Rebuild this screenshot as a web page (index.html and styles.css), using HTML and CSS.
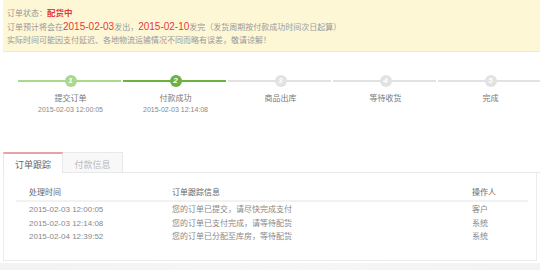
FILE: index.html
```html
<!DOCTYPE html>
<html>
<head>
<meta charset="utf-8">
<link rel="stylesheet" href="styles.css">
</head>
<body>
<div class="notice">
  <div class="line">订单状态：<span class="status">配货中</span></div>
  <div class="line">订单预计将会在<span class="date">2015-02-03</span>发出，<span class="date">2015-02-10</span>发完（发货周期按付款成功时间次日起算）</div>
  <div class="line">实际时间可能因支付延迟、各地物流运输情况不同而略有误差，敬请谅解！</div>
</div>

<div class="steps">
  <div class="step done">
    <div class="bar"><span class="dot">1</span></div>
    <div class="label">提交订单</div>
    <div class="time">2015-02-03 12:00:05</div>
  </div>
  <div class="step current">
    <div class="bar"><span class="dot">2</span></div>
    <div class="label">付款成功</div>
    <div class="time">2015-02-03 12:14:08</div>
  </div>
  <div class="step">
    <div class="bar"><span class="dot">3</span></div>
    <div class="label">商品出库</div>
  </div>
  <div class="step">
    <div class="bar"><span class="dot">4</span></div>
    <div class="label">等待收货</div>
  </div>
  <div class="step">
    <div class="bar"><span class="dot">5</span></div>
    <div class="label">完成</div>
  </div>
</div>

<div class="tabs">
  <div class="tab active">订单跟踪</div>
  <div class="tab">付款信息</div>
  <div class="tab-fill"></div>
</div>
<div class="panel">
  <div class="table">
    <div class="row head">
      <div class="c1">处理时间</div>
      <div class="c2">订单跟踪信息</div>
      <div class="c3">操作人</div>
    </div>
    <div class="row">
      <div class="c1">2015-02-03 12:00:05</div>
      <div class="c2">您的订单已提交，请尽快完成支付</div>
      <div class="c3">客户</div>
    </div>
    <div class="row">
      <div class="c1">2015-02-03 12:14:08</div>
      <div class="c2">您的订单已支付完成，请等待配货</div>
      <div class="c3">系统</div>
    </div>
    <div class="row">
      <div class="c1">2015-02-04 12:39:52</div>
      <div class="c2">您的订单已分配至库房，等待配货</div>
      <div class="c3">系统</div>
    </div>
  </div>
</div>
<div class="bottom"></div>
</body>
</html>
```

FILE: styles.css
```css
* { box-sizing: border-box; }
html, body { margin: 0; padding: 0; }
body {
  width: 540px;
  height: 270px;
  overflow: hidden;
  background: #fff;
  font-family: "Liberation Sans", "Noto Sans CJK SC", sans-serif;
  font-size: 8px;
  color: #888;
}
.notice {
  margin-left: 3px;
  background: #fef7d6;
  border-bottom: 1px solid #f3e9c2;
  padding: 6px 4px 3px;
  height: 52px;
  color: #999;
}
.notice .line { line-height: 14px; height: 14px; white-space: nowrap; }
.status { color: #e4393c; font-weight: bold; font-size: 8.5px; }
.date { color: #e4393c; font-size: 10px; }

.steps {
  display: flex;
  margin: 22px 0 0 18px;
  height: 40px;
}
.step {
  width: 105px;
  flex: none;
  text-align: center;
}
.bar {
  position: relative;
  height: 14px;
  display: flex;
  align-items: center;
  justify-content: center;
}
.bar::before {
  content: "";
  position: absolute;
  left: 0;
  right: 2px;
  top: 6px;
  height: 2px;
  background: #e2e2e2;
}
.dot {
  position: relative;
  width: 12px;
  height: 12px;
  border-radius: 50%;
  background: #e2e2e2;
  color: #fff;
  font-size: 8px;
  font-style: italic;
  font-weight: bold;
  line-height: 12px;
  text-align: center;
}
.done .bar::before, .done .dot { background: #a9d98c; }
.current .bar::before, .current .dot { background: #6cb241; }
.label {
  margin-top: 5px;
  line-height: 12px;
  color: #777;
}
.time {
  line-height: 10px;
  font-size: 7px;
  color: #888;
}

.tabs {
  display: flex;
  margin: 38px 0 0 3px;
  height: 21px;
}
.tab {
  width: 60px;
  height: 21px;
  font-size: 9px;
  padding-top: 5px;
  line-height: 15px;
  text-align: center;
  color: #bbb;
  background: #f8f8f8;
  border: 1px solid #e8e8e8;
  border-left: none;
}
.tab.active {
  width: 60px;
  background: #fff;
  color: #666;
  border-left: 1px solid #e8e8e8;
  border-top: 2px solid #e8a2a2;
  border-bottom: none;
  padding-top: 4px;
}
.tab-fill {
  flex: 1;
  border-bottom: 1px solid #e8e8e8;
}
.panel {
  margin-left: 3px;
  width: 534px;
  height: 88px;
  border: 1px solid #ececec;
  border-top: none;
  padding: 10px 0 0 12px;
}
.table { width: 512px; }
.row {
  display: flex;
  height: 13.5px;
  line-height: 13.5px;
}
.row.head {
  height: 19px;
  line-height: 19px;
  color: #666;
  border-bottom: 2px solid #f2f2f2;
  margin-bottom: 1px;
}
.c1 { width: 156px; padding-left: 13px; flex: none; }
.c2 { width: 300px; flex: none; }
.c3 { flex: 1; }
.bottom {
  margin-top: 2px;
  height: 8px;
  background: linear-gradient(to right, #f3f3f3, #f6f6f6 50%, #f3f3f3);
}
```
